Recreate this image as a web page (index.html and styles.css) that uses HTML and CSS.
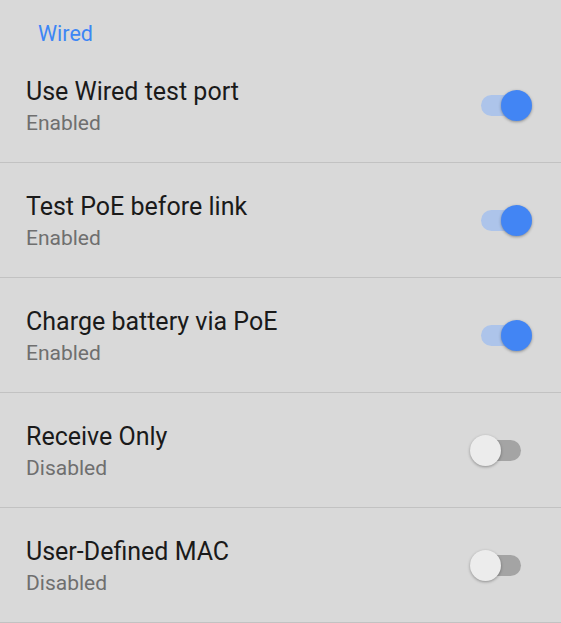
FILE: index.html
```html
<!DOCTYPE html>
<html lang="en">
<head>
    <meta charset="UTF-8">
    <meta name="viewport" content="width=device-width, initial-scale=1.0">
    <title>Wired Settings</title>
    <link rel="stylesheet" href="styles.css">
</head>
<body>
    <div class="settings">
        <div class="category">Wired</div>
        <div class="pref">
            <div class="pref-text">
                <div class="pref-title">Use Wired test port</div>
                <div class="pref-summary">Enabled</div>
            </div>
            <span class="switch on"><span class="thumb"></span></span>
        </div>
        <div class="pref">
            <div class="pref-text">
                <div class="pref-title">Test PoE before link</div>
                <div class="pref-summary">Enabled</div>
            </div>
            <span class="switch on"><span class="thumb"></span></span>
        </div>
        <div class="pref">
            <div class="pref-text">
                <div class="pref-title">Charge battery via PoE</div>
                <div class="pref-summary">Enabled</div>
            </div>
            <span class="switch on"><span class="thumb"></span></span>
        </div>
        <div class="pref">
            <div class="pref-text">
                <div class="pref-title">Receive Only</div>
                <div class="pref-summary">Disabled</div>
            </div>
            <span class="switch"><span class="thumb"></span></span>
        </div>
        <div class="pref">
            <div class="pref-text">
                <div class="pref-title">User-Defined MAC</div>
                <div class="pref-summary">Disabled</div>
            </div>
            <span class="switch"><span class="thumb"></span></span>
        </div>
    </div>
</body>
</html>
```

FILE: styles.css
```css
body {
    margin: 0;
    background-color: #d9d9d9;
    font-family: Roboto, "Noto Sans", sans-serif;
}
.settings {
    width: 561px;
}
.category {
    padding: 21px 38px 1px;
    font-size: 21.5px;
    line-height: 26px;
    color: #3d86f5;
}
.pref {
    display: flex;
    align-items: center;
    justify-content: space-between;
    height: 114px;
    padding: 0 40px 0 26px;
    border-bottom: 1px solid #c2c2c2;
    box-sizing: content-box;
}
.pref-text {
    padding-top: 2px;
}
.pref-title {
    font-size: 25px;
    line-height: 30px;
    color: #1a1a1a;
}
.pref-summary {
    margin-top: 4px;
    font-size: 21px;
    line-height: 25px;
    color: #6f6f6f;
}
.switch {
    position: relative;
    width: 40px;
    height: 21px;
    border-radius: 11px;
    background-color: #a4a4a4;
}
.switch .thumb {
    position: absolute;
    top: -5px;
    left: -11px;
    width: 31px;
    height: 31px;
    border-radius: 50%;
    background-color: #ececec;
    box-shadow: 0 1px 3px rgba(0, 0, 0, 0.35);
}
.switch.on {
    background-color: #adc4ea;
}
.switch.on .thumb {
    left: 20px;
    background-color: #4285f4;
}
```
